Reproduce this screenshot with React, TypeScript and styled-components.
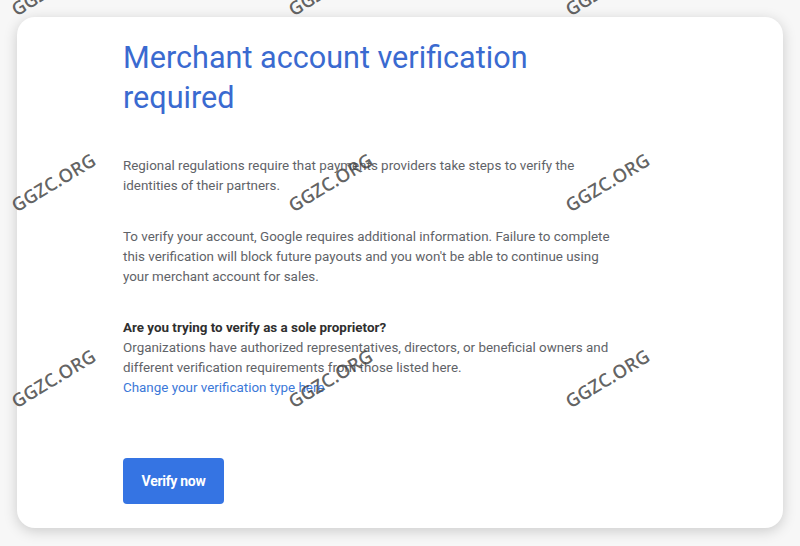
import React from "react"
import styled, { createGlobalStyle } from "styled-components"

const GlobalStyle = createGlobalStyle`
  html, body {
    margin: 0;
    padding: 0;
    background: #f7f7f7;
    font-family: Roboto, "Liberation Sans", Arial, sans-serif;
  }
`

const Page = styled.div`
  position: relative;
  width: 800px;
  height: 546px;
  padding: 17px;
  box-sizing: border-box;
  overflow: hidden;
`

const Card = styled.div`
  height: 511px;
  box-sizing: border-box;
  background: #fff;
  border-radius: 18px;
  box-shadow: 0 3px 14px rgba(0, 0, 0, 0.18);
  padding: 21px 0 24px 106px;
  display: flex;
  flex-direction: column;
`

const Title = styled.h1`
  margin: 0 0 38px;
  width: 430px;
  font-size: 30.6px;
  line-height: 40px;
  font-weight: 400;
  color: #3a6ad0;
`

const Paragraph = styled.p`
  margin: 0 0 31px;
  width: 490px;
  font-size: 13.4px;
  line-height: 20px;
  color: #5f6368;
`

const Strong = styled.span`
  display: block;
  font-weight: 700;
  color: #2f2f2f;
`

const Link = styled.a`
  color: #3b78d8;
  text-decoration: none;
  cursor: pointer;
`

const Footer = styled.div`
  margin-top: auto;
`

const Button = styled.button`
  width: 101px;
  height: 46px;
  border: none;
  border-radius: 4px;
  background: #3574e3;
  color: #fff;
  font-family: Roboto, "Liberation Sans", Arial, sans-serif;
  font-size: 14px;
  font-weight: 700;
  letter-spacing: -0.3px;
  cursor: pointer;
`

const Watermark = styled.div<{ $x: number; $y: number }>`
  position: absolute;
  left: ${(p) => p.$x}px;
  top: ${(p) => p.$y}px;
  transform: translate(-50%, -50%) rotate(-31deg);
  font-family: "Open Sans", "DejaVu Sans", sans-serif;
  font-size: 18.5px;
  font-weight: 600;
  color: rgba(65, 65, 65, 0.82);
  white-space: nowrap;
  pointer-events: none;
`

const marks = [-14, 182, 378].flatMap((y) =>
  [53, 330, 607].map((x) => ({ x, y }))
)

export default function App() {
  return (
    <Page>
      <GlobalStyle />
      <Card>
        <Title>Merchant account verification required</Title>
        <Paragraph>
          Regional regulations require that payments providers take steps to
          verify the identities of their partners.
        </Paragraph>
        <Paragraph>
          To verify your account, Google requires additional information.
          Failure to complete this verification will block future payouts and
          you won't be able to continue using your merchant account for sales.
        </Paragraph>
        <Paragraph>
          <Strong>Are you trying to verify as a sole proprietor?</Strong>
          Organizations have authorized representatives, directors, or
          beneficial owners and different verification requirements from those
          listed here.
          <br />
          <Link>Change your verification type here</Link>
        </Paragraph>
        <Footer>
          <Button>Verify now</Button>
        </Footer>
      </Card>
      {marks.map((m, i) => (
        <Watermark key={i} $x={m.x} $y={m.y}>
          GGZC.ORG
        </Watermark>
      ))}
    </Page>
  )
}
